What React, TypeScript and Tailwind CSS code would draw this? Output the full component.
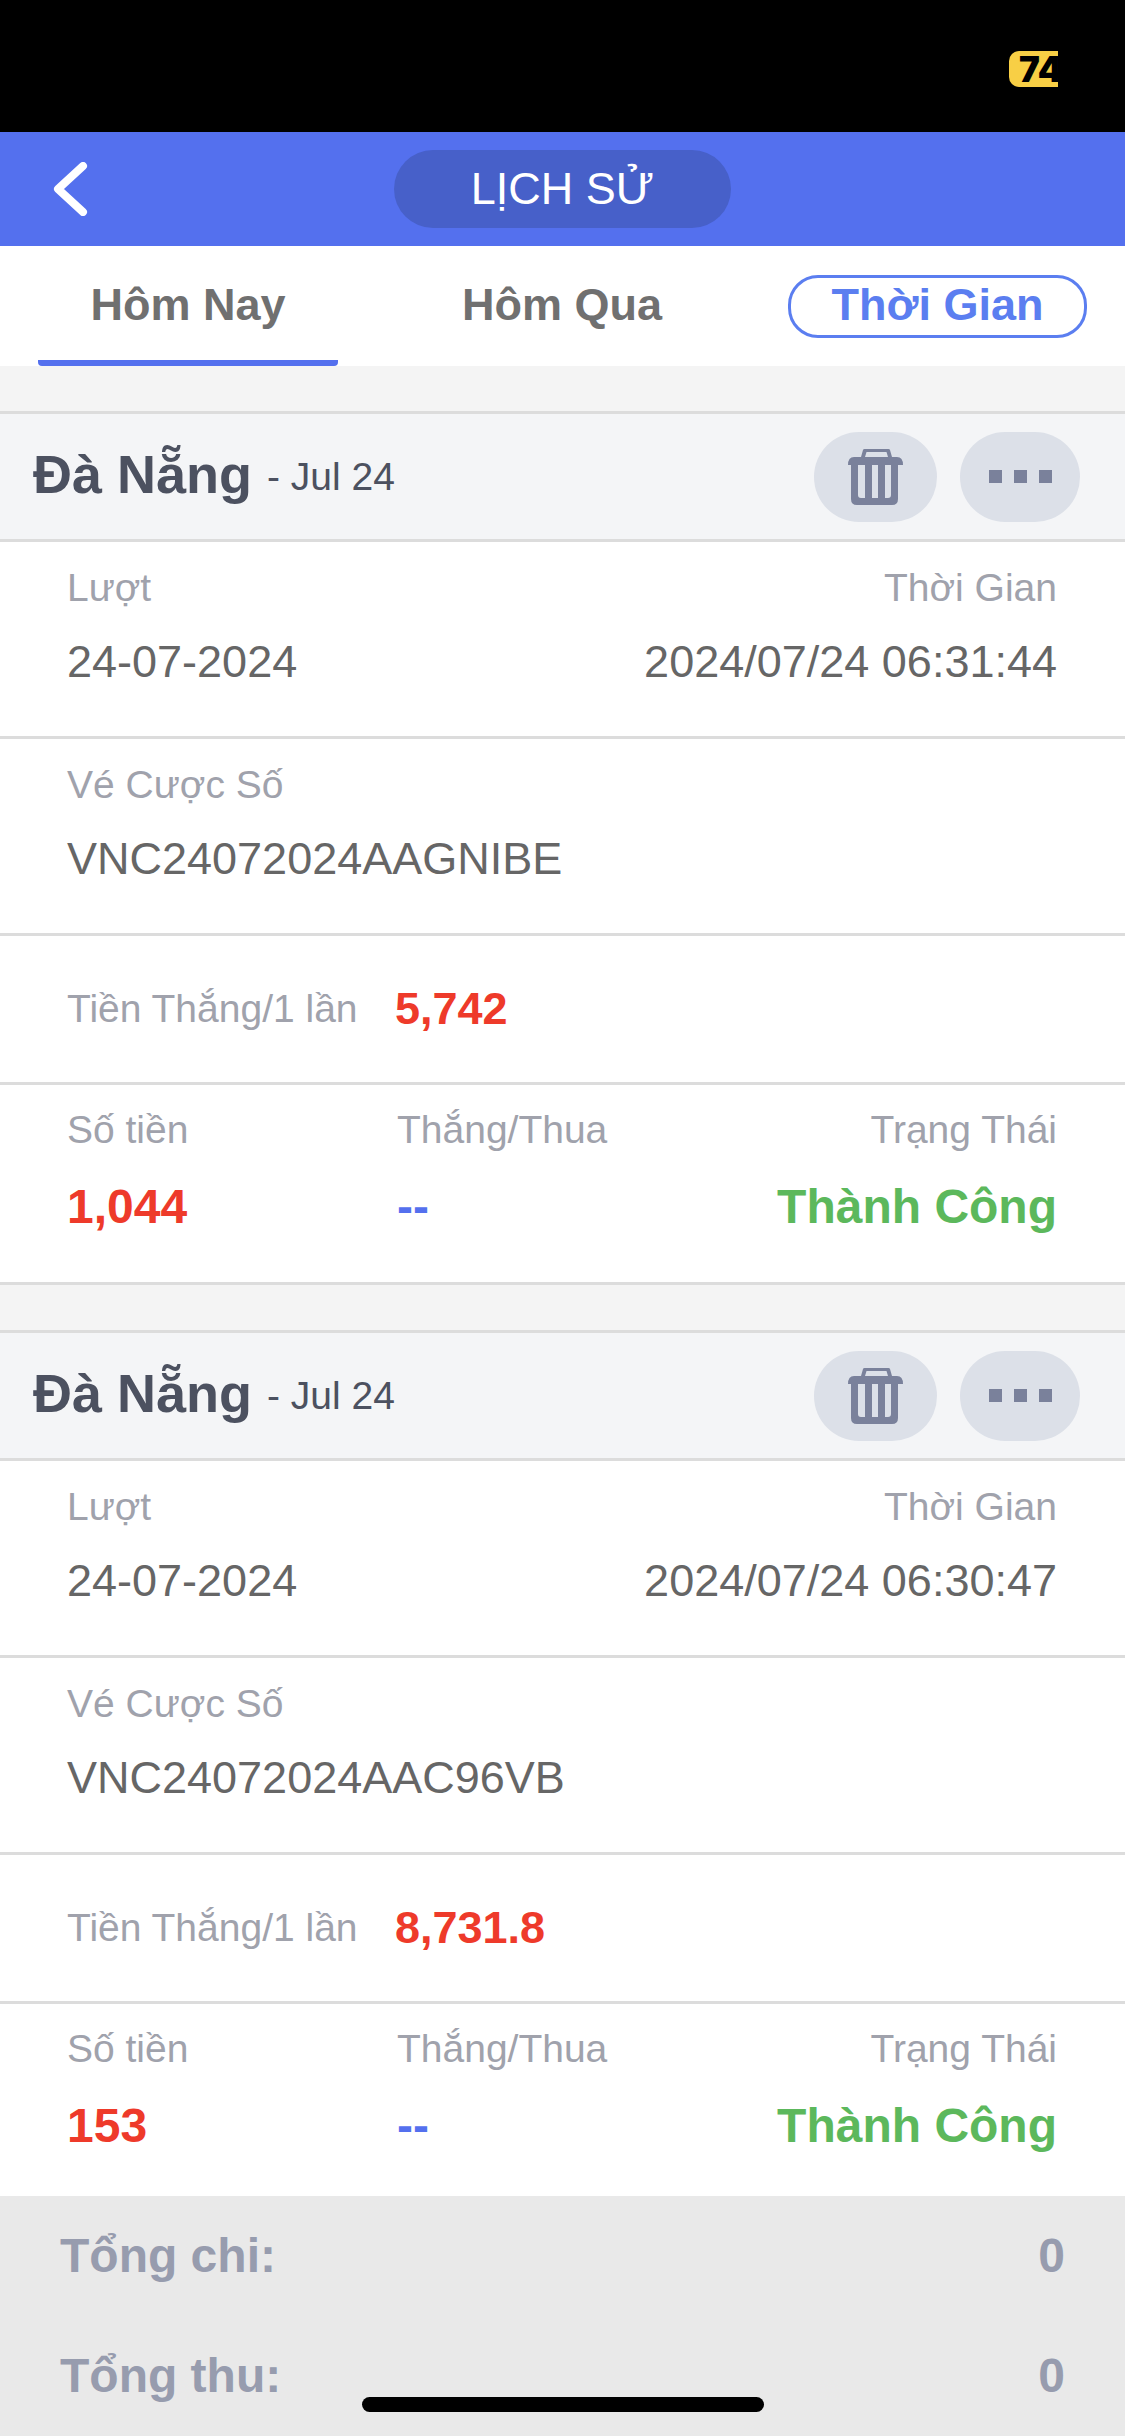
const font = "font-['Liberation_Sans',Arial,sans-serif]";

function Trash() {
  return (
    <svg width="55" height="56" viewBox="0 0 55 56" fill="#7a819b">
      <path fillRule="evenodd" d="M13 8 L15 1 Q15.3 0 16.5 0 H40.5 Q41.7 0 42 1 L44 8 H40 L38.5 3 H18.5 L17 8 Z" />
      <path d="M0 16 Q0 8 6 8 H49 Q55 8 55 16 Z" />
      <path fillRule="evenodd" d="M3 16 H50 V50 Q50 56 44 56 H9 Q3 56 3 50 Z M10 16 V46 Q10 49 13 49 H17 V16 Z M24 16 V49 H30 V16 Z M37 16 V49 H40 Q43 49 43 46 V16 Z" />
    </svg>
  );
}

function Label({ children, className = "" }: { children: React.ReactNode; className?: string }) {
  return <div className={`text-[39px] leading-[44px] text-[#a0a2ac] ${className}`}>{children}</div>;
}

function Card({ ticket, time, win, amount, last = false }: { ticket: string; time: string; win: string; amount: string; last?: boolean }) {
  return (
    <section className="bg-white shrink-0">
      <header className="h-[131px] flex items-center justify-between bg-[#f4f5f7] border-y-[3px] border-[#dcdcdc] pl-[33px] pr-[45px]">
        <div className="flex items-center">
          <span className="text-[54px] leading-[64px] font-bold text-[#4c5160] mb-[5px]">Đà Nẵng</span>
          <span className="text-[39px] leading-[64px] text-[#4c5160] ml-[15px]">- Jul 24</span>
        </div>
        <div className="flex gap-[23px]">
          <div className="w-[123px] h-[90px] rounded-[45px] bg-[#dce0e8] flex items-center justify-center"><Trash /></div>
          <div className="w-[120px] h-[90px] rounded-[45px] bg-[#dce0e8] flex items-center justify-center gap-[12px]">
            <i className="w-[13px] h-[13px] bg-[#7a819b]" />
            <i className="w-[13px] h-[13px] bg-[#7a819b]" />
            <i className="w-[13px] h-[13px] bg-[#7a819b]" />
          </div>
        </div>
      </header>
      <div className="h-[197px] border-b-[3px] border-[#dcdcdc] pl-[67px] pr-[68px] pt-[24px]">
        <div className="flex justify-between"><Label>Lượt</Label><Label>Thời Gian</Label></div>
        <div className="flex justify-between mt-[26px] text-[45px] leading-[52px] text-[#666666]"><span>24-07-2024</span><span>{time}</span></div>
      </div>
      <div className="h-[197px] border-b-[3px] border-[#dcdcdc] pl-[67px] pr-[68px] pt-[24px]">
        <Label>Vé Cược Số</Label>
        <div className="mt-[26px] text-[45px] leading-[52px] text-[#666666]">{ticket}</div>
      </div>
      <div className="h-[149px] border-b-[3px] border-[#dcdcdc] pl-[67px] pr-[68px] flex items-center">
        <Label className="w-[328px]">Tiền Thắng/1 lần</Label>
        <span className="text-[45px] font-bold text-[#ee3a2a]">{win}</span>
      </div>
      <div className={last ? "h-[192px] pl-[67px] pr-[68px] pt-[23px]" : "h-[200px] border-b-[3px] border-[#dcdcdc] pl-[67px] pr-[68px] pt-[23px]"}>
        <div className="flex">
          <Label className="w-[330px]">Số tiền</Label>
          <Label>Thắng/Thua</Label>
          <Label className="ml-auto">Trạng Thái</Label>
        </div>
        <div className="flex mt-[27px] text-[48px] leading-[56px] font-bold">
          <span className="w-[330px] text-[#ee3a2a]">{amount}</span>
          <span className="text-[#5470ee]">--</span>
          <span className="ml-auto text-[#5cb85c]">Thành Công</span>
        </div>
      </div>
    </section>
  );
}

export default function App() {
  return (
    <div className={`relative w-[1125px] h-[2436px] overflow-hidden bg-[#f4f4f4] flex flex-col ${font}`}>
      <div className="h-[132px] shrink-0 bg-black flex justify-end items-start pr-[67px] pt-[51px]">
        <div className="w-[49px] h-[36px] bg-[#f8cf45] rounded-l-[10px] overflow-hidden text-[35px] leading-[36px] font-['Inter'] font-black text-black pl-[10px] whitespace-nowrap">74</div>
      </div>
      <div className="relative h-[114px] shrink-0 bg-[#5470ee] flex items-center justify-center">
        <svg className="absolute left-[50px] top-[30px]" width="40" height="54" viewBox="0 0 40 54" fill="none" stroke="white" strokeWidth="8" strokeLinecap="round" strokeLinejoin="round">
          <path d="M33 4 L8 27 L33 50" />
        </svg>
        <div className="w-[337px] h-[78px] rounded-[39px] bg-[#4760c9] flex items-center justify-center text-white text-[45px]">LỊCH SỬ</div>
      </div>
      <div className="h-[120px] shrink-0 bg-white flex items-start relative text-[45px] font-bold">
        <div className="w-[300px] ml-[38px] h-[120px] border-b-[6px] border-[#5470ee] rounded-b-sm flex justify-center pt-[25px] text-[#707070]">Hôm Nay</div>
        <div className="w-[300px] ml-[74px] flex justify-center pt-[25px] text-[#707070]">Hôm Qua</div>
        <div className="ml-[76px] mt-[29px] w-[299px] h-[63px] rounded-[30px] border-[3px] border-[#5b7ef0] flex items-center justify-center text-[#5b7ef0] pb-[3px]">Thời Gian</div>
      </div>
      <div className="h-[45px] shrink-0" />
      <Card ticket="VNC24072024AAGNIBE" time="2024/07/24 06:31:44" win="5,742" amount="1,044" />
      <div className="h-[45px] shrink-0" />
      <Card ticket="VNC24072024AAC96VB" time="2024/07/24 06:30:47" win="8,731.8" amount="153" last />
      <div className="flex-1 bg-[#e9e9e9] px-[60px] text-[48px] font-bold text-[#979cae]">
        <div className="flex justify-between h-[120px] items-center"><span>Tổng chi:</span><span>0</span></div>
        <div className="flex justify-between h-[120px] items-center"><span>Tổng thu:</span><span>0</span></div>
      </div>
      <div className="absolute left-[362px] bottom-[24px] w-[402px] h-[15px] rounded-full bg-black" />
    </div>
  );
}
